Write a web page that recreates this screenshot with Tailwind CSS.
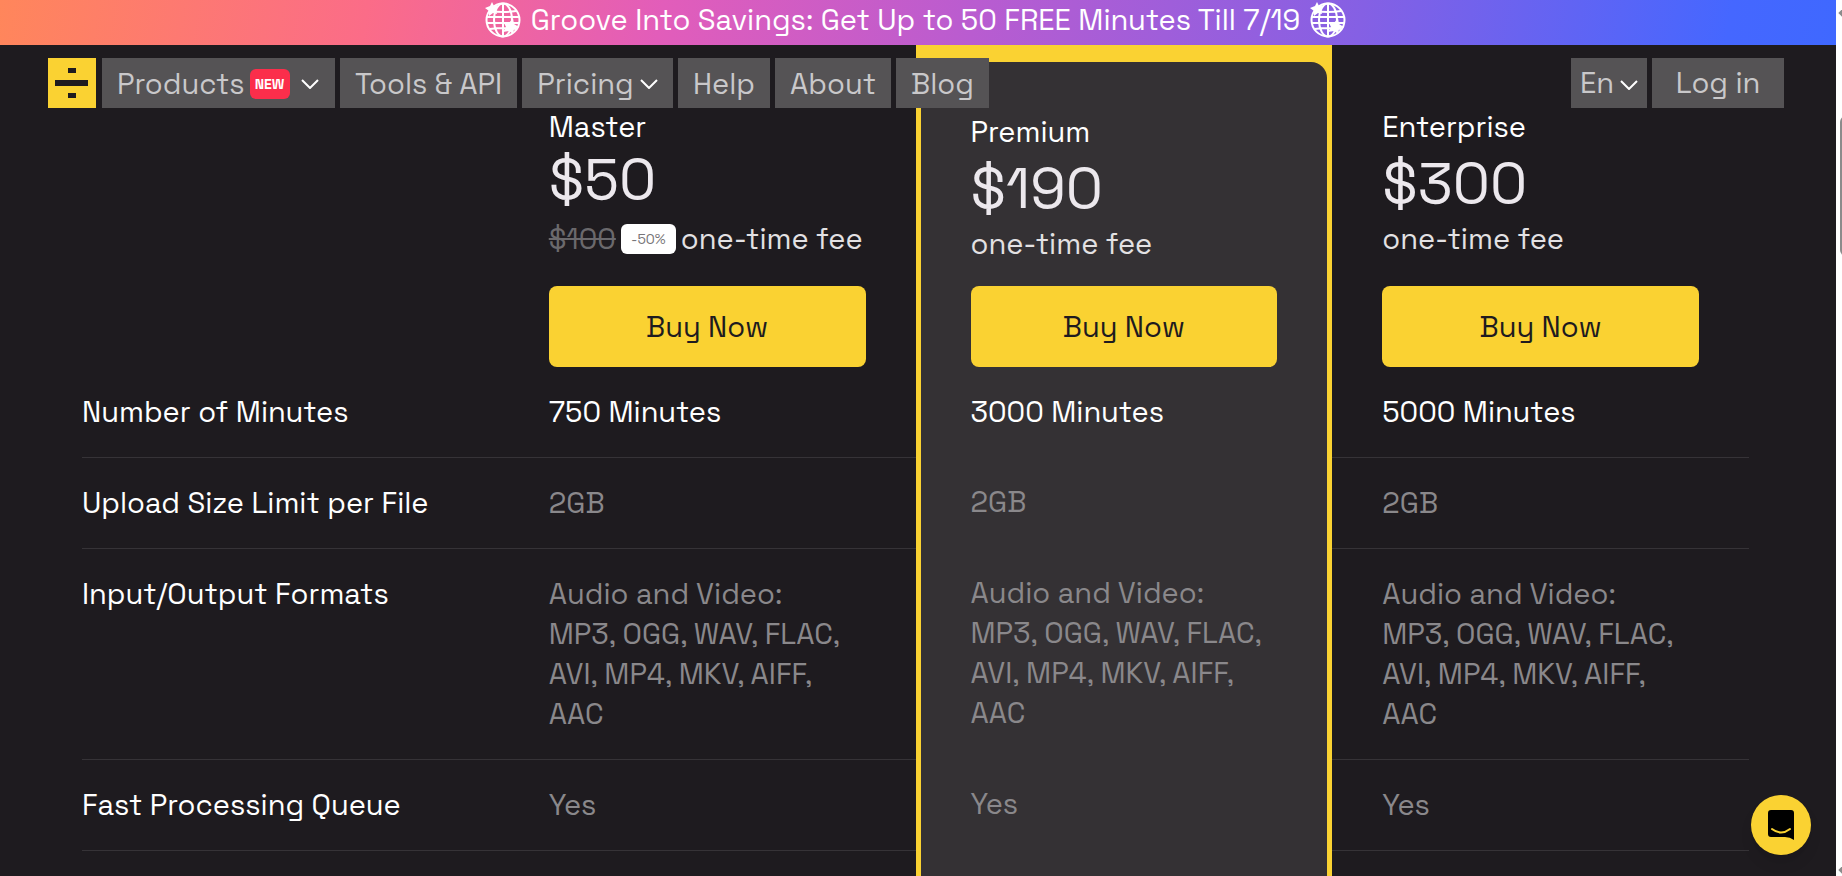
<!DOCTYPE html>
<html lang="en">
<head>
  <meta charset="UTF-8">
  <meta name="viewport" content="width=device-width, initial-scale=1.0">
  <script src="https://cdn.jsdelivr.net/npm/@tailwindcss/browser@4"></script>
  <title>Pricing</title>
</head>
<body class="bg-white text-[29px] leading-10 font-['Space_Grotesk','Inter',sans-serif] h-screen overflow-hidden">
  <svg class="hidden">
    <symbol id="chevron" viewBox="0 0 18 10">
      <path d="M1 1l8 8 8-8" fill="none" stroke="currentColor" stroke-width="2" />
    </symbol>
    <symbol id="globe" viewBox="0 0 36 36">
      <g fill="none" stroke="currentColor" stroke-width="2">
        <circle cx="18" cy="18" r="16.5" />
        <ellipse cx="18" cy="18" rx="9" ry="16.5" />
        <path d="M18 1v34M2 15h32M2 21h32M5 9q13 2 26 0M5 27q13 -2 26 0" />
      </g>
      <path fill="currentColor" d="M7 0l2 4 5 0-3 4 1 4-4-1-4 3 0-5-4-3 5-2zM28 16l1 6 5 3-5 2-1 5-4-3-6 1 3-5-2-4 5 0z" />
    </symbol>
  </svg>

  <!-- scrollbar -->
  <div class="absolute right-0 top-0 h-full w-[6px] overflow-hidden">
    <div class="absolute left-1 top-[9px] size-2 rotate-45 bg-[#8b8b8b]"></div>
    <div class="absolute left-1 top-[116px] w-3 h-[140px] rounded-full bg-[#8b8b8b]"></div>
    <div class="absolute left-1 bottom-[2px] size-2 rotate-45 bg-[#8b8b8b]"></div>
  </div>

  <!-- page -->
  <div class="relative h-full mr-[6px] bg-[#1e1b1f] overflow-hidden text-white">
    <header>
      <div class="h-[45px] pb-[5px] pr-[5px] flex items-center justify-center gap-[10px] bg-[linear-gradient(100deg,#ff865b_0%,#fb6c88_20%,#e25dba_36%,#b95cd0_53%,#8560e4_74%,#4567ff_94%,#3f68ff_100%)]">
        <svg class="size-9"><use href="#globe" /></svg>
        <span>Groove Into Savings: Get Up to 50 FREE Minutes Till 7/19</span>
        <svg class="size-9"><use href="#globe" /></svg>
      </div>

      <nav class="absolute z-10 inset-x-0 top-[58px] h-[50px] pl-12 pr-[52px] flex gap-[5px] text-[#c9c8ca]">
        <a href="#" aria-label="Home" class="w-12 mr-px bg-[#fad232] flex items-center justify-center">
          <svg class="w-12 h-[50px]" viewBox="0 0 48 50" fill="#1e1b1f">
            <path d="M20 10h8v5h-8zM7 22h33v6H7zM20 35h8v5h-8z" />
          </svg>
        </a>
        <button class="w-[233px] pt-0.5 px-[15px] bg-[#555355] flex items-center">
          Products
          <span class="ml-[5px] w-10 h-[30px] rounded-md bg-[#fb2e4b] text-white text-sm leading-[30px] font-semibold">NEW</span>
          <svg class="ml-[11px] w-[18px] h-[10px] text-white"><use href="#chevron" /></svg>
        </button>
        <a href="#" class="w-[177px] pt-0.5 bg-[#555355] flex items-center justify-center">Tools &amp; API</a>
        <button class="w-[151px] pt-0.5 bg-[#555355] flex items-center justify-center gap-[6px]">
          Pricing
          <svg class="w-[18px] h-[10px] text-white"><use href="#chevron" /></svg>
        </button>
        <a href="#" class="w-[92px] pt-0.5 bg-[#555355] flex items-center justify-center">Help</a>
        <a href="#" class="w-[116px] pt-0.5 bg-[#555355] flex items-center justify-center">About</a>
        <a href="#" class="w-[93px] pt-0.5 bg-[#555355] flex items-center justify-center">Blog</a>
        <button class="ml-auto w-[76px] bg-[#555355] flex items-center justify-center gap-[6px]">
          En
          <svg class="mt-1 w-[18px] h-[10px] text-white"><use href="#chevron" /></svg>
        </button>
        <a href="#" class="w-[132px] bg-[#555355] flex items-center justify-center">Log in</a>
      </nav>
    </header>

    <main class="pl-[82px] pr-[87px]">
      <table class="w-full table-fixed border-separate border-spacing-0 text-left">
        <thead class="align-bottom font-normal">
          <tr>
            <td class="p-0"></td>
            <th scope="col" class="px-[50px] py-0 font-normal">
              <div>Master</div>
              <div class="text-[58px] leading-16 text-[#ece8ed]">$50</div>
              <div class="mt-2 mb-[27px] flex items-center whitespace-nowrap text-[#e3e1e3]">
                <s class="text-[#6b696c]">$100</s>
                <span class="mx-[5px] w-[55px] h-[30px] rounded-md bg-white text-[#777578] text-sm leading-[30px] text-center">-50%</span>
                one-time fee
              </div>
              <button class="w-full h-[81px] rounded-lg bg-[#fad232] text-[#1e1b1f]">Buy Now</button>
            </th>
            <th scope="col" class="p-0 font-normal bg-[#fad232]">
              <div class="mt-[17px] mx-[5px] px-[50px] pt-[50px] rounded-t-2xl bg-[#343134]">
                <div>Premium</div>
                <div class="text-[58px] leading-[72px] text-[#ece8ed]">$190</div>
                <div class="mb-[22px] text-[#e3e1e3]">one-time fee</div>
                <button class="w-full h-[81px] rounded-lg bg-[#fad232] text-[#1e1b1f]">Buy Now</button>
              </div>
            </th>
            <th scope="col" class="px-[50px] py-0 font-normal">
              <div>Enterprise</div>
              <div class="text-[58px] leading-[72px] text-[#ece8ed]">$300</div>
              <div class="mb-[27px] text-[#e3e1e3]">one-time fee</div>
              <button class="w-full h-[81px] rounded-lg bg-[#fad232] text-[#1e1b1f]">Buy Now</button>
            </th>
          </tr>
        </thead>
        <tbody class="align-top text-[#8a888b]">
          <tr class="text-white">
            <th scope="row" class="py-[25px] border-b border-[#363337] font-normal text-white">Number of Minutes</th>
            <td class="px-[50px] py-[25px] border-b border-[#363337]">750 Minutes</td>
            <td class="px-[50px] py-[25px] border-x-5 border-[#fad232] bg-[#343134]">3000 Minutes</td>
            <td class="px-[50px] py-[25px] border-b border-[#363337]">5000 Minutes</td>
          </tr>
          <tr>
            <th scope="row" class="py-[25px] border-b border-[#363337] font-normal text-white">Upload Size Limit per File</th>
            <td class="px-[50px] py-[25px] border-b border-[#363337]">2GB</td>
            <td class="px-[50px] py-6 border-x-5 border-[#fad232] bg-[#343134]">2GB</td>
            <td class="px-[50px] py-[25px] border-b border-[#363337]">2GB</td>
          </tr>
          <tr>
            <th scope="row" class="py-[25px] border-b border-[#363337] font-normal text-white">Input/Output Formats</th>
            <td class="px-[50px] py-[25px] border-b border-[#363337]">Audio and Video:<br>MP3, OGG, WAV, FLAC,<br>AVI, MP4, MKV, AIFF,<br>AAC</td>
            <td class="px-[50px] py-6 border-x-5 border-[#fad232] bg-[#343134]">Audio and Video:<br>MP3, OGG, WAV, FLAC,<br>AVI, MP4, MKV, AIFF,<br>AAC</td>
            <td class="px-[50px] py-[25px] border-b border-[#363337]">Audio and Video:<br>MP3, OGG, WAV, FLAC,<br>AVI, MP4, MKV, AIFF,<br>AAC</td>
          </tr>
          <tr>
            <th scope="row" class="py-[25px] border-b border-[#363337] font-normal text-white">Fast Processing Queue</th>
            <td class="px-[50px] py-[25px] border-b border-[#363337]">Yes</td>
            <td class="px-[50px] py-6 border-x-5 border-[#fad232] bg-[#343134]">Yes</td>
            <td class="px-[50px] py-[25px] border-b border-[#363337]">Yes</td>
          </tr>
          <tr class="h-24">
            <td></td>
            <td></td>
            <td class="border-x-5 border-[#fad232] bg-[#343134]"></td>
            <td></td>
          </tr>
        </tbody>
      </table>
    </main>

    <!-- chat launcher -->
    <button aria-label="Open chat" class="absolute right-[25px] bottom-[21px] size-[60px] rounded-full bg-[#fad232] shadow-lg flex items-center justify-center">
      <svg class="w-[26px] h-[30px]" viewBox="0 0 26 30">
        <path d="M3 0h20q3 0 3 3v27q-4-3-9-3H3q-3 0-3-3V3q0-3 3-3z" fill="#000" />
        <path d="M4 19q9 7 18 0" fill="none" stroke="#fad232" stroke-width="2" stroke-linecap="round" />
      </svg>
    </button>
  </div>
</body>
</html>
